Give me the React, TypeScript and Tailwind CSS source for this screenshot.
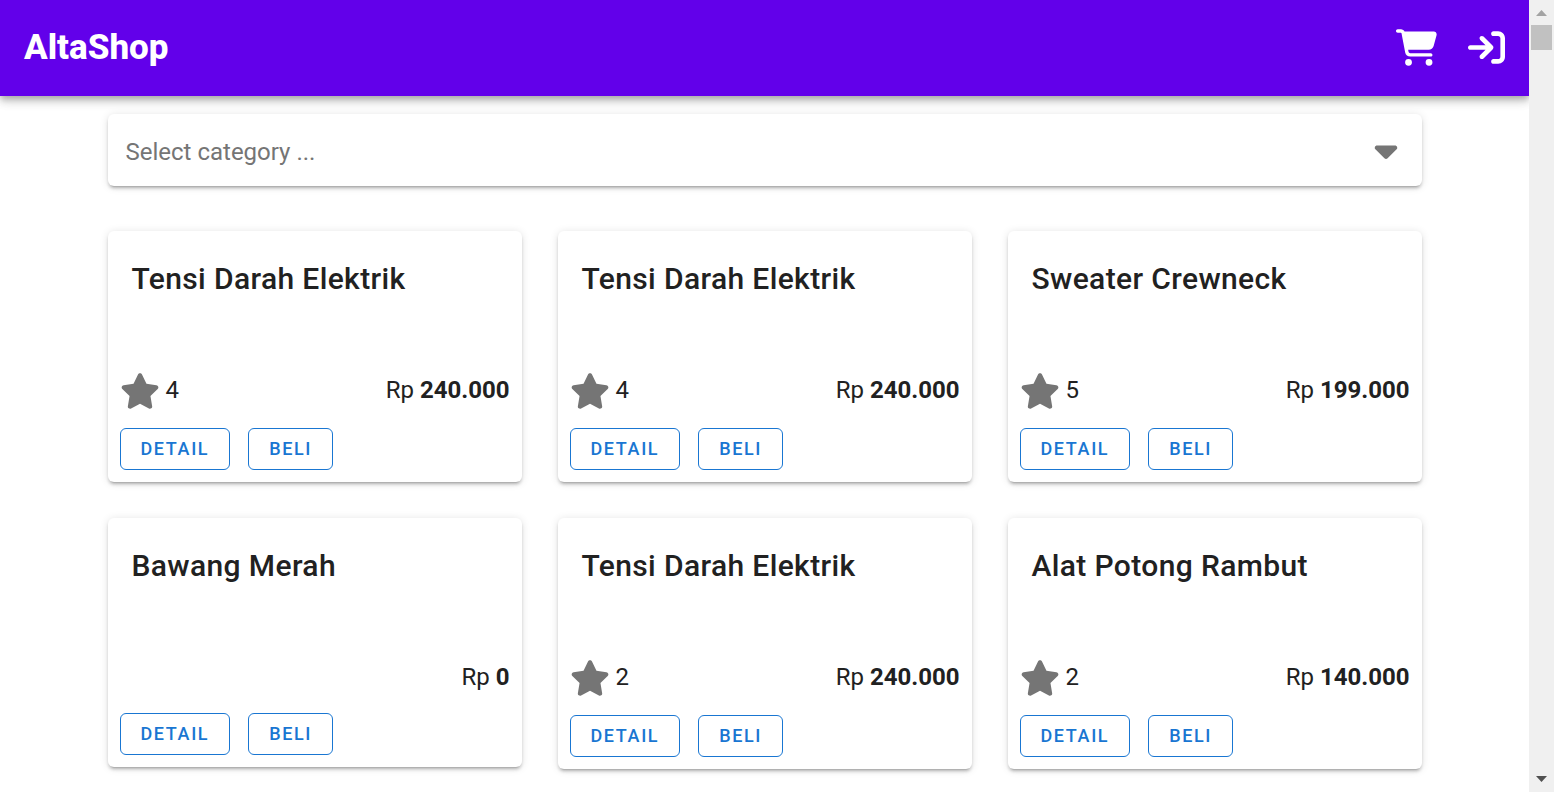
import { FaArrowRightToBracket, FaCaretDown, FaCartShopping, FaStar } from "react-icons/fa6";

type Product = { id: number; name: string; rating?: number; price: string };

const products: Product[] = [
  { id: 1, name: "Tensi Darah Elektrik", rating: 4, price: "240.000" },
  { id: 2, name: "Tensi Darah Elektrik", rating: 4, price: "240.000" },
  { id: 3, name: "Sweater Crewneck", rating: 5, price: "199.000" },
  { id: 4, name: "Bawang Merah", price: "0" },
  { id: 5, name: "Tensi Darah Elektrik", rating: 2, price: "240.000" },
  { id: 6, name: "Alat Potong Rambut", rating: 2, price: "140.000" },
];

const raised =
  "rounded-md bg-white shadow-[0_4px_2px_-3px_rgba(0,0,0,0.2),0_3px_3px_0_rgba(0,0,0,0.14),0_1px_8px_0_rgba(0,0,0,0.12)]";

function OutlineButton({ label }: { label: string }) {
  return (
    <button
      type="button"
      className="h-[42px] rounded-md border border-[#1976d2] px-5 text-lg font-medium tracking-[0.09em] text-[#1976d2] uppercase"
    >
      {label}
    </button>
  );
}

function ProductCard({ product }: { product: Product }) {
  return (
    <article className={raised}>
      <h2 className="h-[141px] px-6 pt-6 text-3xl leading-12 font-medium tracking-[0.0125em]">{product.name}</h2>
      <div className="flex items-start justify-between px-3 text-2xl leading-9">
        <div className="flex gap-[6px]">
          {product.rating !== undefined && (
            <>
              <FaStar className="h-[38px] w-10 text-[#757575]" aria-label="Rating" />
              <span>{product.rating}</span>
            </>
          )}
        </div>
        <p>
          Rp <strong className="font-bold">{product.price}</strong>
        </p>
      </div>
      <div className="flex gap-[18px] px-3 pt-[18px] pb-3">
        <OutlineButton label="Detail" />
        <OutlineButton label="Beli" />
      </div>
    </article>
  );
}

function Scrollbar() {
  return (
    <div aria-hidden="true" className="flex w-[25px] shrink-0 flex-col items-center bg-[#f0f0f0]">
      <svg className="h-[25px] w-[25px] shrink-0" viewBox="0 0 25 25">
        <path d="M7 16h11l-5.500-6z" fill="#a3a3a3" />
      </svg>
      <div className="h-[25px] w-[21px] bg-[#c1c1c1]" />
      <svg className="mt-auto h-[25px] w-[25px] shrink-0" viewBox="0 0 25 25">
        <path d="M7 9h11l-5.500 6z" fill="#505050" />
      </svg>
    </div>
  );
}

export default function App() {
  return (
    <div className="flex h-screen overflow-hidden bg-white font-[Roboto,sans-serif] text-[#212121]">
      <div className="min-w-0 flex-1 overflow-hidden">
        <header className="flex h-24 items-center justify-between bg-[#6200ea] px-6 text-white shadow-[0_3px_6px_-1px_rgba(0,0,0,0.2),0_6px_8px_0_rgba(0,0,0,0.14),0_1px_15px_0_rgba(0,0,0,0.12)]">
          <a href="#" className="text-[35px] leading-[54px] font-extrabold">
            AltaShop
          </a>
          <nav className="flex items-center gap-[31px] pb-[2px]">
            <a href="#cart" aria-label="Cart">
              <FaCartShopping className="h-[37px] w-[41px]" />
            </a>
            <a href="#login" aria-label="Login">
              <FaArrowRightToBracket className="h-[37px] w-[37px]" />
            </a>
          </nav>
        </header>
        <main className="mx-auto max-w-[1350px] px-[18px] pt-[18px]">
          <div className={`relative h-[72px] ${raised}`}>
            <select
              aria-label="Category"
              className="h-full w-full appearance-none rounded-md bg-transparent px-[18px] pt-1 text-2xl text-[#757575]"
            >
              <option>Select category ...</option>
            </select>
            <span className="pointer-events-none absolute inset-y-0 right-6 flex items-center text-[#757575]">
              <FaCaretDown className="h-9 w-6" />
            </span>
          </div>
          <div className="mt-[45px] grid grid-cols-3 items-start gap-9 pb-9">
            {products.map((product) => (
              <ProductCard key={product.id} product={product} />
            ))}
          </div>
        </main>
      </div>
      <Scrollbar />
    </div>
  );
}
